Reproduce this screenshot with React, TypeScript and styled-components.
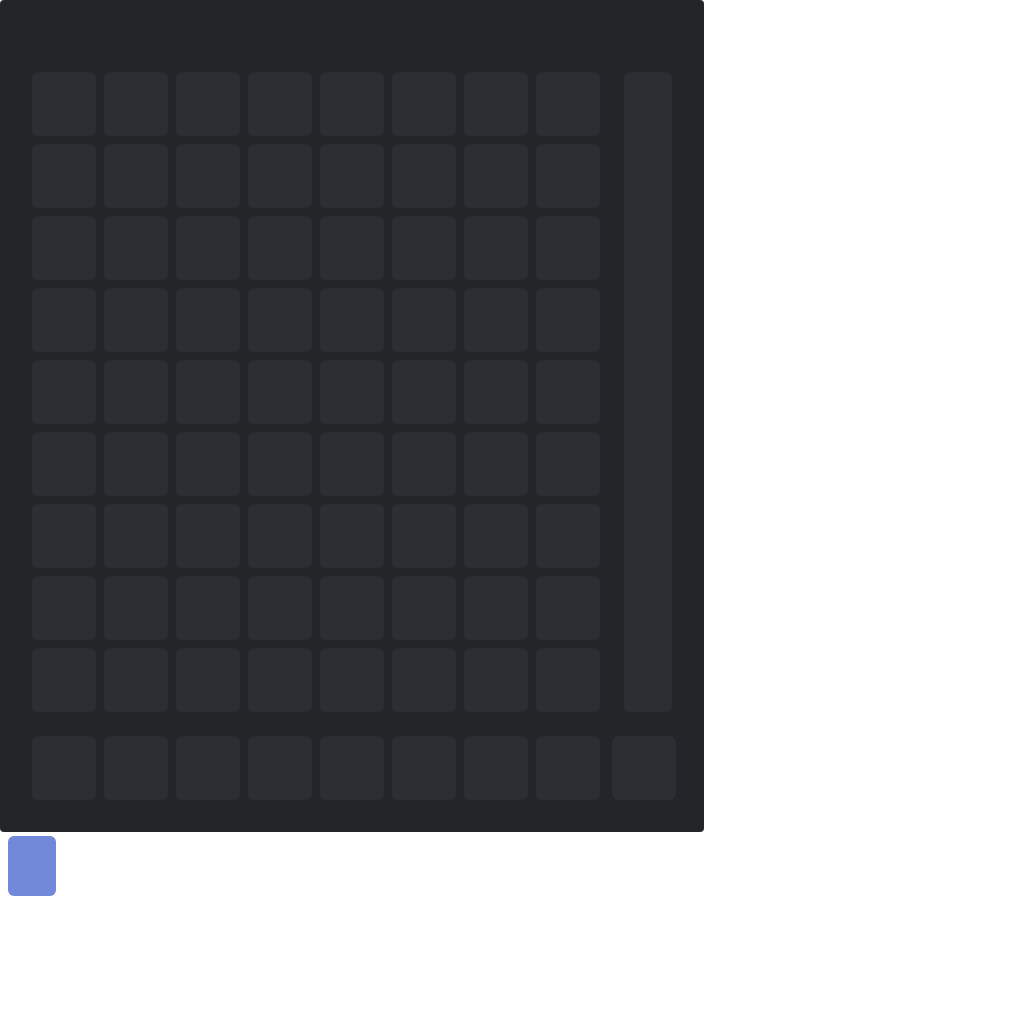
import React from "react";
import styled, { createGlobalStyle } from "styled-components";

const GlobalStyle = createGlobalStyle`
  body {
    margin: 0;
    background: #ffffff;
    font-family: "Noto Sans", sans-serif;
  }
`;

const Panel = styled.div`
  width: 704px;
  box-sizing: border-box;
  padding: 72px 32px 32px;
  background: #232629;
  border-radius: 4px;
  display: flex;
  flex-direction: column;
  gap: 24px;
`;

const Top = styled.div`
  display: flex;
  gap: 24px;
`;

const Grid = styled.div`
  display: grid;
  grid-template-columns: repeat(8, 64px);
  grid-auto-rows: 64px;
  gap: 8px;
  flex-shrink: 0;
`;

const Tile = styled.div`
  background: #2b2e33;
  border-radius: 6px;
`;

const SideBar = styled.div`
  width: 48px;
  background: #2b2e33;
  border-radius: 6px;
`;

const Bottom = styled.div`
  display: flex;
  gap: 12px;
`;

const ExtraTile = styled(Tile)`
  flex: 0 0 64px;
  height: 64px;
`;

const BlueButton = styled.button`
  display: block;
  margin: 4px 0 0 8px;
  width: 48px;
  height: 60px;
  border: none;
  padding: 0;
  border-radius: 6px;
  background: #7289da;
`;

const tiles = (n: number) =>
  Array.from({ length: n }, (_, i) => <Tile key={i} />);

export default function App(): JSX.Element {
  return (
    <>
      <GlobalStyle />
      <Panel>
        <Top>
          <Grid>{tiles(72)}</Grid>
          <SideBar />
        </Top>
        <Bottom>
          <Grid>{tiles(8)}</Grid>
          <ExtraTile />
        </Bottom>
      </Panel>
      <BlueButton type="button" />
    </>
  );
}
